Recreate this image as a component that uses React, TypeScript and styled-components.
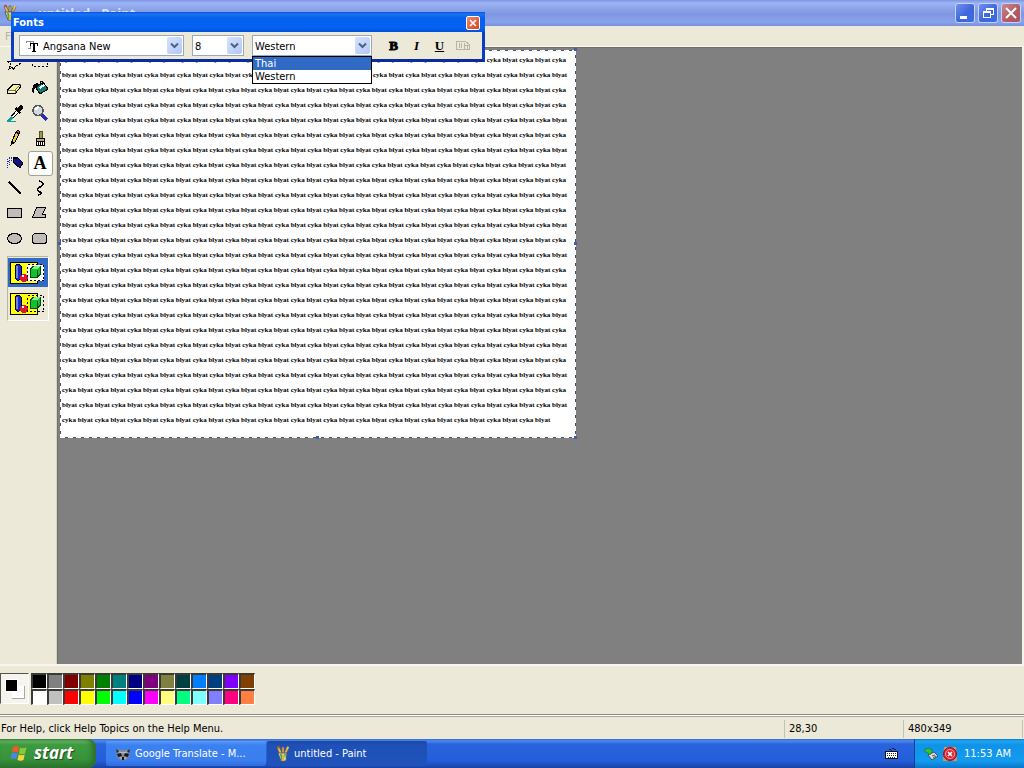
import React from "react";
import styled, { createGlobalStyle, css } from "styled-components";

const GlobalStyle = createGlobalStyle`
  * { box-sizing: border-box; }
  html, body { margin: 0; }
  body, button, select, input {
    font-family: "DejaVu Sans Condensed", "Noto Sans", sans-serif;
    font-size: 11px;
    color: #000;
  }
  button { padding: 0; border: 0; background: none; }
  svg { display: block; }
`;

const Desktop = styled.div`
  position: relative;
  display: flex;
  flex-direction: column;
  min-height: 100vh;
  background: #ece9d8;
  overflow: hidden;
`;

/* ---------- Paint window ---------- */

const TitleBar = styled.header`
  display: flex;
  align-items: center;
  gap: 5px;
  height: 26px;
  padding: 0 3px 0 3px;
  background: linear-gradient(#7b95e4 0, #9db5f6 3px, #8ea6ea 8px, #7f97e0 14px, #88a3ec 22px, #7a90dc 100%);
`;

const Title = styled.h1`
  flex: 1;
  margin: 0;
  padding-left: 16px;
  color: #d8e4f8;
  font: bold 13px "Open Sans", "Noto Sans", sans-serif;
`;

const CaptionButton = styled.button<{ $close?: boolean }>`
  display: grid;
  place-items: center;
  width: 20px;
  height: 20px;
  border: 1px solid #c5d2f8;
  border-radius: 3px;
  background: ${(p) =>
    p.$close
      ? "linear-gradient(135deg, #c48790, #b35b62 60%, #a85560)"
      : "linear-gradient(135deg, #6f90ee, #3f66dc 55%, #3e6ce8)"};
`;

const CaptionButtons = styled.div`
  display: flex;
  gap: 3px;
`;

const MenuBar = styled.nav`
  display: flex;
  height: 21px;
  padding: 2px 5px;
  border-bottom: 1px solid #fbfaf4;
`;

const MenuItem = styled.button`
  color: #b5b2a3;
`;

const Workspace = styled.div`
  flex: 1;
  display: flex;
  border-right: 2px solid #f6f4ea;
`;

const ToolBox = styled.aside`
  width: 57px;
  padding: 4px 3px;
  border-right: 1px solid #d8d5c4;
`;

const ToolGrid = styled.div`
  display: grid;
  grid-template-columns: 25px 25px;
  grid-auto-rows: 25px;
`;

const ToolButton = styled.button<{ $selected?: boolean }>`
  display: grid;
  justify-content: start;
  align-content: start;
  padding: 2px;
  border: 1px solid transparent;
  ${(p) =>
    p.$selected &&
    css`
      background: #fdfdfb;
      border-color: #a3a196;
      border-radius: 3px;
    `}
`;

const ToolOptions = styled.div`
  display: flex;
  flex-direction: column;
  gap: 2px;
  width: 42px;
  height: 65px;
  margin: 5px 4px;
  padding: 1px 0 0;
  border: 1px solid;
  border-color: #b8b5a5 #fff #fff #b8b5a5;
`;

const OptionButton = styled.button<{ $selected?: boolean }>`
  display: grid;
  place-items: center start;
  height: 29px;
  padding-left: 1px;
  background: ${(p) => (p.$selected ? "#316ac5" : "transparent")};
`;

const CanvasArea = styled.main`
  flex: 1;
  display: flex;
  align-items: flex-start;
  padding: 2px;
  background: #808080;
  border: 1px solid #716f64;
  border-width: 1px 0 0 1px;
`;

const dash = "#fff 0 5px, #4a5270 5px 8px";

const Sheet = styled.div`
  position: relative;
  width: 516px;
  padding: 3px 0 10px 2px;
  background:
    repeating-linear-gradient(90deg, ${dash}) top / 100% 1px no-repeat,
    repeating-linear-gradient(90deg, ${dash}) bottom / 100% 1px no-repeat,
    repeating-linear-gradient(180deg, ${dash}) left / 1px 100% no-repeat,
    repeating-linear-gradient(180deg, ${dash}) right / 1px 100% no-repeat,
    #fff;
`;

const SheetText = styled.p`
  margin: 0;
  font: bold 7px/15px "Liberation Serif", serif;
  white-space: pre;
`;

const Handle = styled.i<{ $x: number; $y: number }>`
  position: absolute;
  left: ${(p) => p.$x}%;
  top: ${(p) => p.$y}%;
  width: 3px;
  height: 3px;
  margin: -2px;
  background: #3b5fb5;
`;

const ColorBox = styled.section`
  display: flex;
  gap: 2px;
  height: 50px;
  padding-top: 7px;
  border-top: 2px solid #f8f6ee;
`;

const CurrentColors = styled.div`
  display: grid;
  align-items: start;
  width: 29px;
  height: 31px;
  padding: 5px 4px;
  background: #f5f4ee;
  border: 1px solid;
  border-color: #55534c #fff #fff #55534c;
`;

const Palette = styled.div`
  display: grid;
  grid-template-columns: repeat(14, 16px);
  grid-auto-rows: 16px;
`;

const Swatch = styled.button<{ $color: string }>`
  background: ${(p) => p.$color};
  border: 1px solid;
  border-width: 2px 1px 1px 2px;
  border-color: #3a3934 #fff #fff #3a3934;
`;

const StatusBar = styled.footer`
  display: flex;
  align-items: center;
  height: 25px;
  padding: 3px 1px 0 0;
  border-top: 1px solid #8c8a7e;
  box-shadow: inset 0 1px #fff, inset 0 2px #aca899;
`;

const StatusCell = styled.span<{ $width?: number }>`
  ${(p) => (p.$width ? `width: ${p.$width}px;` : "flex: 1;")}
  padding-left: ${(p) => (p.$width ? 4 : 1)}px;
  line-height: 18px;
  border-right: 1px solid #c5c2b2;
`;

/* ---------- Fonts toolbar ---------- */

const FontsWindow = styled.section`
  position: absolute;
  left: 11px;
  top: 12px;
  width: 474px;
  background: #ece9d8;
  border: 3px solid #0a3cc8;
  border-top: 0;
  border-bottom-color: #0a2ca0;
`;

const FontsTitle = styled.div`
  display: flex;
  align-items: center;
  justify-content: space-between;
  height: 20px;
  margin: 0 -3px;
  padding: 1px 5px 0 2px;
  color: #fff;
  font-weight: bold;
  background: linear-gradient(#0b50d8 0, #1a74f4 2px, #0560ee 6px, #0562f2 16px, #0450d8 100%);
`;

const FontsClose = styled.button`
  display: grid;
  place-items: center;
  width: 14px;
  height: 14px;
  border: 1px solid #fff;
  border-radius: 2px;
  background: linear-gradient(135deg, #ee8a6a, #d5431c);
`;

const FontsBody = styled.div`
  display: flex;
  align-items: center;
  height: 27px;
  padding-left: 5px;
  gap: 8px;
`;

const Combo = styled.div<{ $width: number }>`
  display: flex;
  align-items: center;
  position: relative;
  width: ${(p) => p.$width}px;
  height: 21px;
  padding: 1px;
  background: #fff;
  border: 1px solid #9aa9b8;
`;

const ComboSelect = styled.select`
  flex: 1;
  min-width: 0;
  height: 17px;
  padding: 1px 1px 0;
  appearance: none;
  border: 0;
  background: transparent;
`;

const ComboArrow = styled.span`
  display: grid;
  place-items: center;
  width: 15px;
  height: 17px;
  border-radius: 2px;
  background: linear-gradient(135deg, #d6e2fd, #b4c8f6);
`;

const ComboIcon = styled.span`
  padding: 0 3px 0 4px;
`;

const ListBox = styled.ul`
  position: absolute;
  left: -1px;
  top: 20px;
  width: 120px;
  margin: 0;
  padding: 0;
  list-style: none;
  background: #fff;
  border: 1px solid #000;
`;

const ListItem = styled.li<{ $selected?: boolean }>`
  padding-left: 2px;
  line-height: 13px;
  ${(p) => p.$selected && "background: #316ac5; color: #fff;"}
`;

const StyleButtons = styled.div`
  display: flex;
  padding-left: 2px;
`;

const StyleButton = styled.button<{ $kind: "b" | "i" | "u" | "v" }>`
  display: grid;
  place-items: center;
  width: 23px;
  height: 22px;
  font: bold 13px "Liberation Serif", serif;
  -webkit-text-stroke: 1px currentColor;
  -webkit-text-stroke-width: ${(p) => (p.$kind === "b" ? "1px" : "0")};
  ${(p) => p.$kind === "i" && "font-style: italic;"}
  ${(p) => p.$kind === "u" && "text-decoration: underline;"}
`;

/* ---------- Taskbar ---------- */

const TaskBar = styled.footer`
  display: flex;
  height: 29px;
  color: #fff;
  background: linear-gradient(#3168d5 0, #4a8cf0 2px, #2a63dc 5px, #245edb 22px, #1941a5 100%);
`;

const StartButton = styled.button`
  display: flex;
  align-items: center;
  gap: 6px;
  width: 96px;
  padding: 0 0 2px 10px;
  border-radius: 0 8px 8px 0;
  color: #fff;
  font: italic bold 17px/24px "Open Sans", "Noto Sans", sans-serif;
  text-shadow: 1px 1px 1px #1c4a1c;
  background: linear-gradient(#3f8f42 0, #67b567 2px, #3c9a3f 6px, #37933a 20px, #2a742d 100%);
  box-shadow: inset -4px 0 5px #2c6f30;
`;

const Tasks = styled.div`
  flex: 1;
  display: flex;
  gap: 1px;
  padding: 2px 0 2px 10px;
`;

const Task = styled.button<{ $active?: boolean }>`
  display: flex;
  align-items: center;
  gap: 4px;
  width: 160px;
  padding-left: 9px;
  border-radius: 2px;
  color: #fff;
  background: ${(p) =>
    p.$active
      ? "linear-gradient(#1b48a0, #1e50b6 4px, #1f53bc)"
      : "linear-gradient(#5a9af8, #3c81f0 4px, #3a7ef0 20px, #2f6bdc)"};
`;

const LanguageButton = styled.button`
  width: 29px;
`;

const Tray = styled.div`
  display: flex;
  align-items: center;
  gap: 3px;
  width: 110px;
  padding-left: 9px;
  border-left: 1px solid #0c3f9c;
  background: linear-gradient(#1470d4 0, #1ba8f2 2px, #1192ea 6px, #119cf0 22px, #0d74c8 100%);
`;

const Clock = styled.time`
  flex: 1;
  padding-right: 13px;
  text-align: right;
`;

/* ---------- Drawings ---------- */

const Icon = ({ children, w = 18, h = 18, crisp = true }: { children: React.ReactNode; w?: number; h?: number; crisp?: boolean }) => (
  <svg width={w} height={h} viewBox={`0 0 ${w} ${h}`} fill="none" shapeRendering={crisp ? "crispEdges" : "auto"} aria-hidden="true">
    {children}
  </svg>
);

const Brushes = () => (
  <Icon w={14} h={18} crisp={false}>
    <path d="M3 8L1 2l2-1 3 7M6 8V2h2v6M8 8l3-6 2 1-3 6" fill="#d8c07a" stroke="#7a5a3a" strokeWidth=".8" />
    <path d="M1 2l2-1 1 3z" fill="#d0392b" />
    <path d="M10 4l2-3 1 2z" fill="#e7d24b" />
    <path d="M2 8h9l-1 8H5z" fill="#d9dbd0" stroke="#5c5c50" />
    <path d="M4 9h2v6H5zM8 9h2l-1 5z" fill="#57a548" />
    <path d="M6 10h2v6H6z" fill="#e5b92c" />
  </Icon>
);

const toolIcons: [string, React.ReactNode][] = [
  ["Free-Form Select", <path d="M3 15l2-5-4-3 5 0 3-4 2 4 5 0-3 4-3 1-3 4-1-3z" stroke="#000" strokeDasharray="3 1" />],
  ["Select", <rect x="1.5" y="3.500" width="15" height="9" stroke="#000" strokeDasharray="2 2" />],
  ["Eraser", <><path d="M1.500 11l6-6h7v3l-5 6h-8z" fill="#f3f0a0" stroke="#000" /><path d="M2 11h7l6-6M9 11v3" stroke="#77753a" /><path d="M3 12h6v1H3z" fill="#fff" /></>],
  ["Fill", <><path d="M7 7l5-4 5 7-8 5-4-6z" fill="#0b7a78" stroke="#000" /><path d="M8 8l5-3 1 2-5 3z" fill="#fff" /><path d="M8 5c-4-2-7 1-7 8l2 2c0-5 0-6 3-7z" fill="#000" /><path d="M9 5V2h2v4" stroke="#000" /></>],
  ["Pick Color", <><path d="M3 15l8-9 2 2-8 8z" fill="#fff" stroke="#000" /><path d="M10 3l2 1 2-3 3 1v3l-3 2 1 2-2 1-4-5z" fill="#000" /><path d="M1 16l5-4 1 2-3 3h6v1H1z" fill="#159b9b" /></>],
  ["Magnifier", <><path d="M11 11l5 5" stroke="#2b2bb0" strokeWidth="3" /><circle cx="7" cy="6.500" r="5" fill="#d3d9e2" stroke="#555" strokeWidth="1.500" /><path d="M4 6l3-3" stroke="#fff" strokeWidth="1.500" /></>],
  ["Pencil", <><path d="M6 12l4-9 3 2-4 8-4 3z" fill="#e8c83c" stroke="#000" /><path d="M10 3l3 2 1-2-2-2z" fill="#d8404a" stroke="#000" /><path d="M5 16l1-4 2 1z" fill="#000" /></>],
  ["Brush", <><path d="M8 2h3v7H8z" fill="#9a9a50" stroke="#55551a" /><path d="M5.500 9h8v3h-8z" fill="#b4b06a" stroke="#000" /><path d="M5.500 12h8v4h-8z" fill="#fff" stroke="#000" /><path d="M7.500 13v3M9.500 13v3M11.500 13v3" stroke="#000" /></>],
  ["Airbrush", <><path d="M8 5l3-2 6 6-3 5-7-6z" fill="#12128c" stroke="#000" /><path d="M7 4h4" stroke="#000" strokeWidth="2" /><path d="M6 3H3M4 6L1 9M1.500 5v10M3.500 4v8M5.500 4v4" stroke="#2626b4" strokeDasharray="1 1" /></>],
  ["Text", <text x="9" y="15" textAnchor="middle" fill="#000" fontFamily="Liberation Serif, serif" fontWeight="bold" fontSize="18">A</text>],
  ["Line", <path d="M3 3l12 12" stroke="#000" strokeWidth="1.500" />],
  ["Curve", <path d="M8 2c5 1 5 4 1 6s-3 4 0 5-1 3-2 3" stroke="#000" strokeWidth="1.500" />],
  ["Rectangle", <rect x="1.500" y="4.500" width="14" height="9" fill="#c0bdb8" stroke="#000" />],
  ["Polygon", <path d="M5.500 3.500h9l-3 7h3v3h-13z" fill="#c0bdb8" stroke="#000" />],
  ["Ellipse", <ellipse cx="8.500" cy="9.500" rx="7" ry="5" fill="#c0bdb8" stroke="#000" />],
  ["Rounded Rectangle", <rect x="1.500" y="4.500" width="14" height="10" rx="3" fill="#c0bdb8" stroke="#000" />],
];

const ShapesIcon = ({ opaque }: { opaque: boolean }) => (
  <Icon w={36} h={24}>
    <rect x="1.500" y="1.500" width="27" height="21" fill="#ffff10" stroke="#000" />
    {opaque && <path d="M18 4h17v16H18z" fill="#fff" />}
    <path d="M6 5l2-2h2l2 2v12l-2 2H8l-2-2z" fill="#1c28c8" stroke="#000" />
    <path d="M7 5h2v12H7z" fill="#6f83f0" />
    <circle cx="15" cy="17" r="4" fill="#e0142c" />
    <path d="M13 14h2v2h-2z" fill="#fff" />
    <path d="M21.500 8l3-3h7v8l-3 3h-7z" fill="#12c030" stroke="#064d10" />
    <path d="M22 8h6l3-3h-6z" fill="#83f090" />
    <path d="M28.500 8.500v7" stroke="#064d10" />
    <rect x="18.500" y="3.500" width="16" height="16" stroke="#000" strokeDasharray="2 2" />
  </Icon>
);

const Chevron = () => (
  <Icon w={9} h={7} crisp={false}>
    <path d="M1 1.500l3.500 3.500L8 1.500" stroke="#4d6185" strokeWidth="2" />
  </Icon>
);

const FontGlyph = () => (
  <Icon w={14} h={14}>
    <path d="M1.500 4V2.500h7V4M5 2v7M3 9.500h3" stroke="#8a8a8a" />
    <path d="M5.500 7V4.500h7V7M7 12.500h4" stroke="#000" />
    <path d="M9 4v9" stroke="#000" strokeWidth="2" />
  </Icon>
);

const Flag = () => (
  <Icon w={18} h={18} crisp={false}>
    <path d="M3 3c2-1.500 4-1.500 6 0L8 8.500C6 7.500 4 7.500 2 8.500z" fill="#f0592a" />
    <path d="M10 3.500c2 1 4 1 6.500 0L15 9.500c-2 1-4 1-6 0z" fill="#8cc63e" />
    <path d="M1.700 9.500c2-1 4-1 6 0l-1.200 5.500c-2-1-4-1-6 0z" fill="#4a86ea" />
    <path d="M8.700 10.500c2 1 4 1 6 0L13.500 16c-2 1-4 1-6 0z" fill="#fbd43a" />
  </Icon>
);

const Raccoon = () => (
  <Icon w={16} h={16} crisp={false}>
    <path d="M1 3l4 1h6l4-1-1 4 1 3-4 4H5L1 10l1-3z" fill="#7f8a97" />
    <path d="M1 3l3 2-2 2zM15 3l-3 2 2 2z" fill="#222" />
    <path d="M2 8l4-1 1 3-4 1zM14 8l-4-1-1 3 4 1z" fill="#16181c" />
    <path d="M4 6l4 1 4-1M5 12h6" stroke="#cfd6dd" strokeWidth=".8" />
    <path d="M7 11h2v3H7z" fill="#111" />
  </Icon>
);

const Keyboard = () => (
  <Icon w={14} h={14}>
    <path d="M4 2.500h2M7 1.500h2M9 2.500h2M6 3.500h1" stroke="#0a1f66" />
    <rect x=".5" y="4.500" width="12" height="7" fill="#fff" stroke="#111" />
    <path d="M2 6.500h9M2 8.500h9M3 10.500h7" stroke="#222" strokeDasharray="1 1" />
  </Icon>
);

const SafeRemove = () => (
  <Icon w={15} h={16} crisp={false}>
    <path d="M4 9l6-3 4 4-6 4z" fill="#d9dde2" stroke="#44505c" />
    <path d="M8 10l3-1M9 12l3-2" stroke="#4c5a66" />
    <path d="M1 3l5-1 1 2 2 0-3 5-2-2-3-1z" fill="#35c03b" stroke="#137820" strokeWidth=".6" />
  </Icon>
);

const Alert = () => (
  <Icon w={16} h={16} crisp={false}>
    <path d="M2 1h12l1 14H1z" fill="#d99355" />
    <circle cx="8" cy="8" r="6.500" fill="#da2433" stroke="#8f1420" />
    <circle cx="8" cy="8" r="4.500" stroke="#f49aa0" />
    <path d="M6 10l4-4M6 6l4 4" stroke="#fff" strokeWidth="1.500" />
  </Icon>
);

/* ---------- Content ---------- */

const colors = [
  "#000000", "#808080", "#800000", "#808000", "#008000", "#008080", "#000080",
  "#800080", "#808040", "#004040", "#0080ff", "#004080", "#8000ff", "#804000",
  "#ffffff", "#c0c0c0", "#ff0000", "#ffff00", "#00ff00", "#00ffff", "#0000ff",
  "#ff00ff", "#ffff80", "#00ff80", "#80ffff", "#8080ff", "#ff0080", "#ff8040",
];

const pair = "cyka blyat ";
const fromCyka = pair.repeat(15) + "cyka";
const fromBlyat = "blyat " + pair.repeat(15).trimEnd();

const lines = [
  fromCyka,
  fromBlyat,
  fromCyka,
  "blyat " + pair.repeat(9) + "cyka " + pair.repeat(5) + "cyka",
  fromBlyat,
  fromCyka,
  fromBlyat,
  pair.repeat(9) + "cyka " + pair.repeat(6).trimEnd(),
  ...Array.from({ length: 16 }, (_, i) => (i % 2 ? fromBlyat : fromCyka)),
  pair.repeat(15).trimEnd(),
];

const handles: [number, number][] = [[0, 50], [50, 100], [100, 0], [100, 50], [100, 100]];

export default function App() {
  return (
    <>
      <GlobalStyle />
      <Desktop>
        <TitleBar>
          <Brushes />
          <Title>untitled - Paint</Title>
          <CaptionButtons>
            <CaptionButton aria-label="Minimize">
              <Icon w={14} h={14}><path d="M2 10h7v3H2z" fill="#fff" /></Icon>
            </CaptionButton>
            <CaptionButton aria-label="Restore">
              <Icon w={14} h={14}>
                <path d="M5.500 5V2.500h7v6H10" stroke="#fff" />
                <rect x="2.500" y="5.500" width="7" height="6" stroke="#fff" />
                <path d="M2 5h8v2H2zM5 2h8v2H5z" fill="#fff" />
              </Icon>
            </CaptionButton>
            <CaptionButton $close aria-label="Close">
              <Icon w={14} h={14} crisp={false}><path d="M2 2l10 10M12 2L2 12" stroke="#fff" strokeWidth="2" /></Icon>
            </CaptionButton>
          </CaptionButtons>
        </TitleBar>
        <MenuBar>
          <MenuItem>File</MenuItem>
        </MenuBar>

        <Workspace>
          <ToolBox>
            <ToolGrid>
              {toolIcons.map(([name, art]) => (
                <ToolButton key={name} aria-label={name} $selected={name === "Text"}>
                  <Icon>{art}</Icon>
                </ToolButton>
              ))}
            </ToolGrid>
            <ToolOptions>
              <OptionButton $selected aria-label="Opaque background"><ShapesIcon opaque /></OptionButton>
              <OptionButton aria-label="Transparent background"><ShapesIcon opaque={false} /></OptionButton>
            </ToolOptions>
          </ToolBox>
          <CanvasArea>
            <Sheet>
              <SheetText>{lines.join("\n")}</SheetText>
              {handles.map(([x, y]) => <Handle key={`${x}-${y}`} $x={x} $y={y} />)}
            </Sheet>
          </CanvasArea>
        </Workspace>

        <ColorBox>
          <CurrentColors>
            <svg width="20" height="20" shapeRendering="crispEdges" aria-hidden="true">
              <path d="M7 7h12v12H7z" fill="#fff" />
              <path d="M7 19.500h13M19.500 7v13" stroke="#aca899" />
              <path d="M0 0h13v13H0z" fill="#fff" />
              <path d="M1 1h11v11H1z" fill="#000" />
            </svg>
          </CurrentColors>
          <Palette>
            {colors.map((c) => <Swatch key={c} $color={c} aria-label={c} />)}
          </Palette>
        </ColorBox>
        <StatusBar>
          <StatusCell>For Help, click Help Topics on the Help Menu.</StatusCell>
          <StatusCell $width={119}>28,30</StatusCell>
          <StatusCell $width={119}>480x349</StatusCell>
        </StatusBar>

        <TaskBar>
          <StartButton><Flag />start</StartButton>
          <Tasks>
            <Task><Raccoon />Google Translate - M...</Task>
            <Task $active><Brushes />untitled - Paint</Task>
          </Tasks>
          <LanguageButton aria-label="Keyboard layout"><Keyboard /></LanguageButton>
          <Tray>
            <SafeRemove />
            <Alert />
            <Clock>11:53 AM</Clock>
          </Tray>
        </TaskBar>

        <FontsWindow>
          <FontsTitle>
            Fonts
            <FontsClose aria-label="Close fonts toolbar">
              <Icon w={10} h={10} crisp={false}><path d="M2 2l6 6M8 2L2 8" stroke="#fff" strokeWidth="1.500" /></Icon>
            </FontsClose>
          </FontsTitle>
          <FontsBody>
            <Combo $width={165}>
              <ComboIcon><FontGlyph /></ComboIcon>
              <ComboSelect aria-label="Font"><option>Angsana New</option></ComboSelect>
              <ComboArrow><Chevron /></ComboArrow>
            </Combo>
            <Combo $width={52}>
              <ComboSelect aria-label="Font size"><option>8</option></ComboSelect>
              <ComboArrow><Chevron /></ComboArrow>
            </Combo>
            <Combo $width={120}>
              <ComboSelect aria-label="Script" defaultValue="Western"><option>Thai</option><option>Western</option></ComboSelect>
              <ComboArrow><Chevron /></ComboArrow>
              <ListBox>
                <ListItem $selected>Thai</ListItem>
                <ListItem>Western</ListItem>
              </ListBox>
            </Combo>
            <StyleButtons>
              <StyleButton $kind="b" aria-label="Bold">B</StyleButton>
              <StyleButton $kind="i" aria-label="Italic">I</StyleButton>
              <StyleButton $kind="u" aria-label="Underline">U</StyleButton>
              <StyleButton $kind="v" aria-label="Vertical text" disabled>
                <Icon w={14} h={12}><path d="M.5 1.500h9l4 3v5H.5zM3.500 3v5M5.500 3v5M8.500 3v6M8.500 5.500h4M11.500 6v4" stroke="#b9b5a4" /></Icon>
              </StyleButton>
            </StyleButtons>
          </FontsBody>
        </FontsWindow>
      </Desktop>
    </>
  );
}
